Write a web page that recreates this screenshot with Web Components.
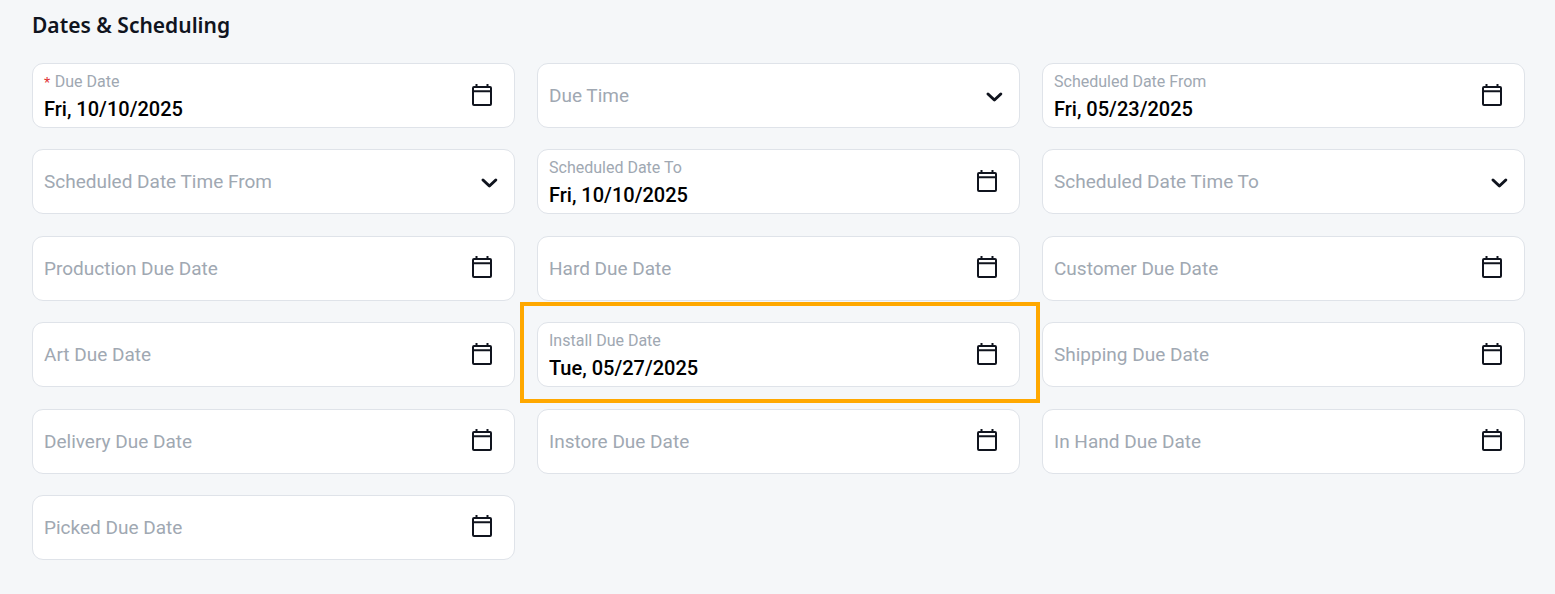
<!DOCTYPE html>
<html lang="en">
<head>
<meta charset="utf-8">
<meta name="viewport" content="width=device-width, initial-scale=1">
<title>Dates &amp; Scheduling</title>
<style>
  body {
    margin: 0;
    min-height: 100vh;
    display: flex;
    background: #f5f7f9;
    color: #10141e;
    font-family: Roboto, "Noto Sans", sans-serif;
  }
</style>
</head>
<body>
<form-section heading="Dates &amp; Scheduling">
  <date-field label="Due Date" value="Fri, 10/10/2025" required></date-field>
  <time-field label="Due Time"></time-field>
  <date-field label="Scheduled Date From" value="Fri, 05/23/2025"></date-field>
  <time-field label="Scheduled Date Time From"></time-field>
  <date-field label="Scheduled Date To" value="Fri, 10/10/2025"></date-field>
  <time-field label="Scheduled Date Time To"></time-field>
  <date-field label="Production Due Date"></date-field>
  <date-field label="Hard Due Date"></date-field>
  <date-field label="Customer Due Date"></date-field>
  <date-field label="Art Due Date"></date-field>
  <date-field label="Install Due Date" value="Tue, 05/27/2025" highlighted></date-field>
  <date-field label="Shipping Due Date"></date-field>
  <date-field label="Delivery Due Date"></date-field>
  <date-field label="Instore Due Date"></date-field>
  <date-field label="In Hand Due Date"></date-field>
  <date-field label="Picked Due Date"></date-field>
</form-section>

<script>
  const fieldStyles = `
    :host { display: block; position: relative; }
    .box {
      box-sizing: border-box;
      min-height: 65px;
      display: grid;
      grid-template-columns: 1fr auto;
      align-items: center;
      background: #fff;
      border: 1px solid #dfe3e9;
      border-radius: 11px;
    }
    label {
      grid-area: 1 / 1;
      padding: 1px 0 0 11px;
      color: #a0a8b2;
      font-size: 19px;
      line-height: 24px;
      white-space: nowrap;
      pointer-events: none;
      z-index: 1;
    }
    input, select {
      grid-area: 1 / 1;
      align-self: stretch;
      box-sizing: border-box;
      min-width: 0;
      width: 100%;
      margin: 0;
      padding: 0 11px;
      border: 0;
      border-radius: 11px;
      background: none;
      color: #000;
      font: 500 20px/24px Roboto, "Noto Sans", sans-serif;
      appearance: none;
    }
    :host([value]) label { align-self: start; padding-top: 6px; font-size: 16px; }
    :host([value]) input { padding-top: 27px; }
    .mark { color: #e03131; font-family: "Liberation Sans", sans-serif; vertical-align: -2px; line-height: 1; }
    svg { display: block; }
  `;

  class FormSection extends HTMLElement {
    connectedCallback() {
      const root = this.attachShadow({ mode: 'open' });
      root.innerHTML = `
        <style>
          :host { display: flex; flex: 1; }
          section {
            flex: 1;
            display: flex;
            flex-direction: column;
            gap: 25px;
            padding: 12px 30px 34px 32px;
          }
          h2 { margin: 0; font: 600 21px/26px "Noto Sans", sans-serif; }
          .grid {
            flex: 1;
            display: grid;
            grid-template-columns: repeat(3, minmax(0, 1fr));
            column-gap: 22px;
            row-gap: 20px;
            align-content: space-between;
          }
        </style>
        <section aria-labelledby="title">
          <h2 id="title"></h2>
          <div class="grid"><slot></slot></div>
        </section>`;
      root.querySelector('h2').textContent = this.getAttribute('heading');
    }
  }

  class DateField extends HTMLElement {
    connectedCallback() {
      const root = this.attachShadow({ mode: 'open' });
      root.innerHTML = `
        <style>
          ${fieldStyles}
          button {
            grid-area: 1 / 2;
            margin: 0 20px 2px 0;
            padding: 0;
            border: 0;
            background: none;
            color: #10141e;
            cursor: pointer;
          }
          :host([highlighted])::after {
            content: "";
            position: absolute;
            inset: -20px -20px -16px -17px;
            border: 4px solid #ffa800;
            pointer-events: none;
            z-index: 2;
          }
        </style>
        <div class="box">
          <label for="field"></label>
          <input id="field" type="text" autocomplete="off">
          <button type="button" aria-label="Open calendar">
            <svg width="24" height="24" viewBox="0 0 24 24" fill="none" stroke="currentColor" stroke-width="2" aria-hidden="true">
              <rect x="3" y="4" width="18" height="18" rx="1"/>
              <path d="M6.5 1v3M17.5 1v3M3 8.2h18"/>
            </svg>
          </button>
        </div>`;
      const label = root.querySelector('label');
      label.textContent = this.getAttribute('label');
      const input = root.querySelector('input');
      input.value = this.getAttribute('value') || '';
      if (this.hasAttribute('required')) {
        input.required = true;
        const mark = document.createElement('span');
        mark.className = 'mark';
        mark.textContent = '* ';
        label.prepend(mark);
      }
    }
  }

  class TimeField extends HTMLElement {
    connectedCallback() {
      const root = this.attachShadow({ mode: 'open' });
      root.innerHTML = `
        <style>
          ${fieldStyles}
          select { grid-column: 1 / 3; }
          svg { grid-area: 1 / 2; margin: 2px 13px 0 0; color: #10141e; pointer-events: none; z-index: 1; }
        </style>
        <div class="box">
          <label for="field"></label>
          <select id="field"><option value=""></option></select>
          <svg width="24" height="24" viewBox="0 0 24 24" fill="none" stroke="currentColor" stroke-width="3" stroke-linecap="round" stroke-linejoin="round" aria-hidden="true">
            <path d="M6 9l6.4 6 6.4-6"/>
          </svg>
        </div>`;
      root.querySelector('label').textContent = this.getAttribute('label');
    }
  }

  customElements.define('form-section', FormSection);
  customElements.define('date-field', DateField);
  customElements.define('time-field', TimeField);
</script>
</body>
</html>
